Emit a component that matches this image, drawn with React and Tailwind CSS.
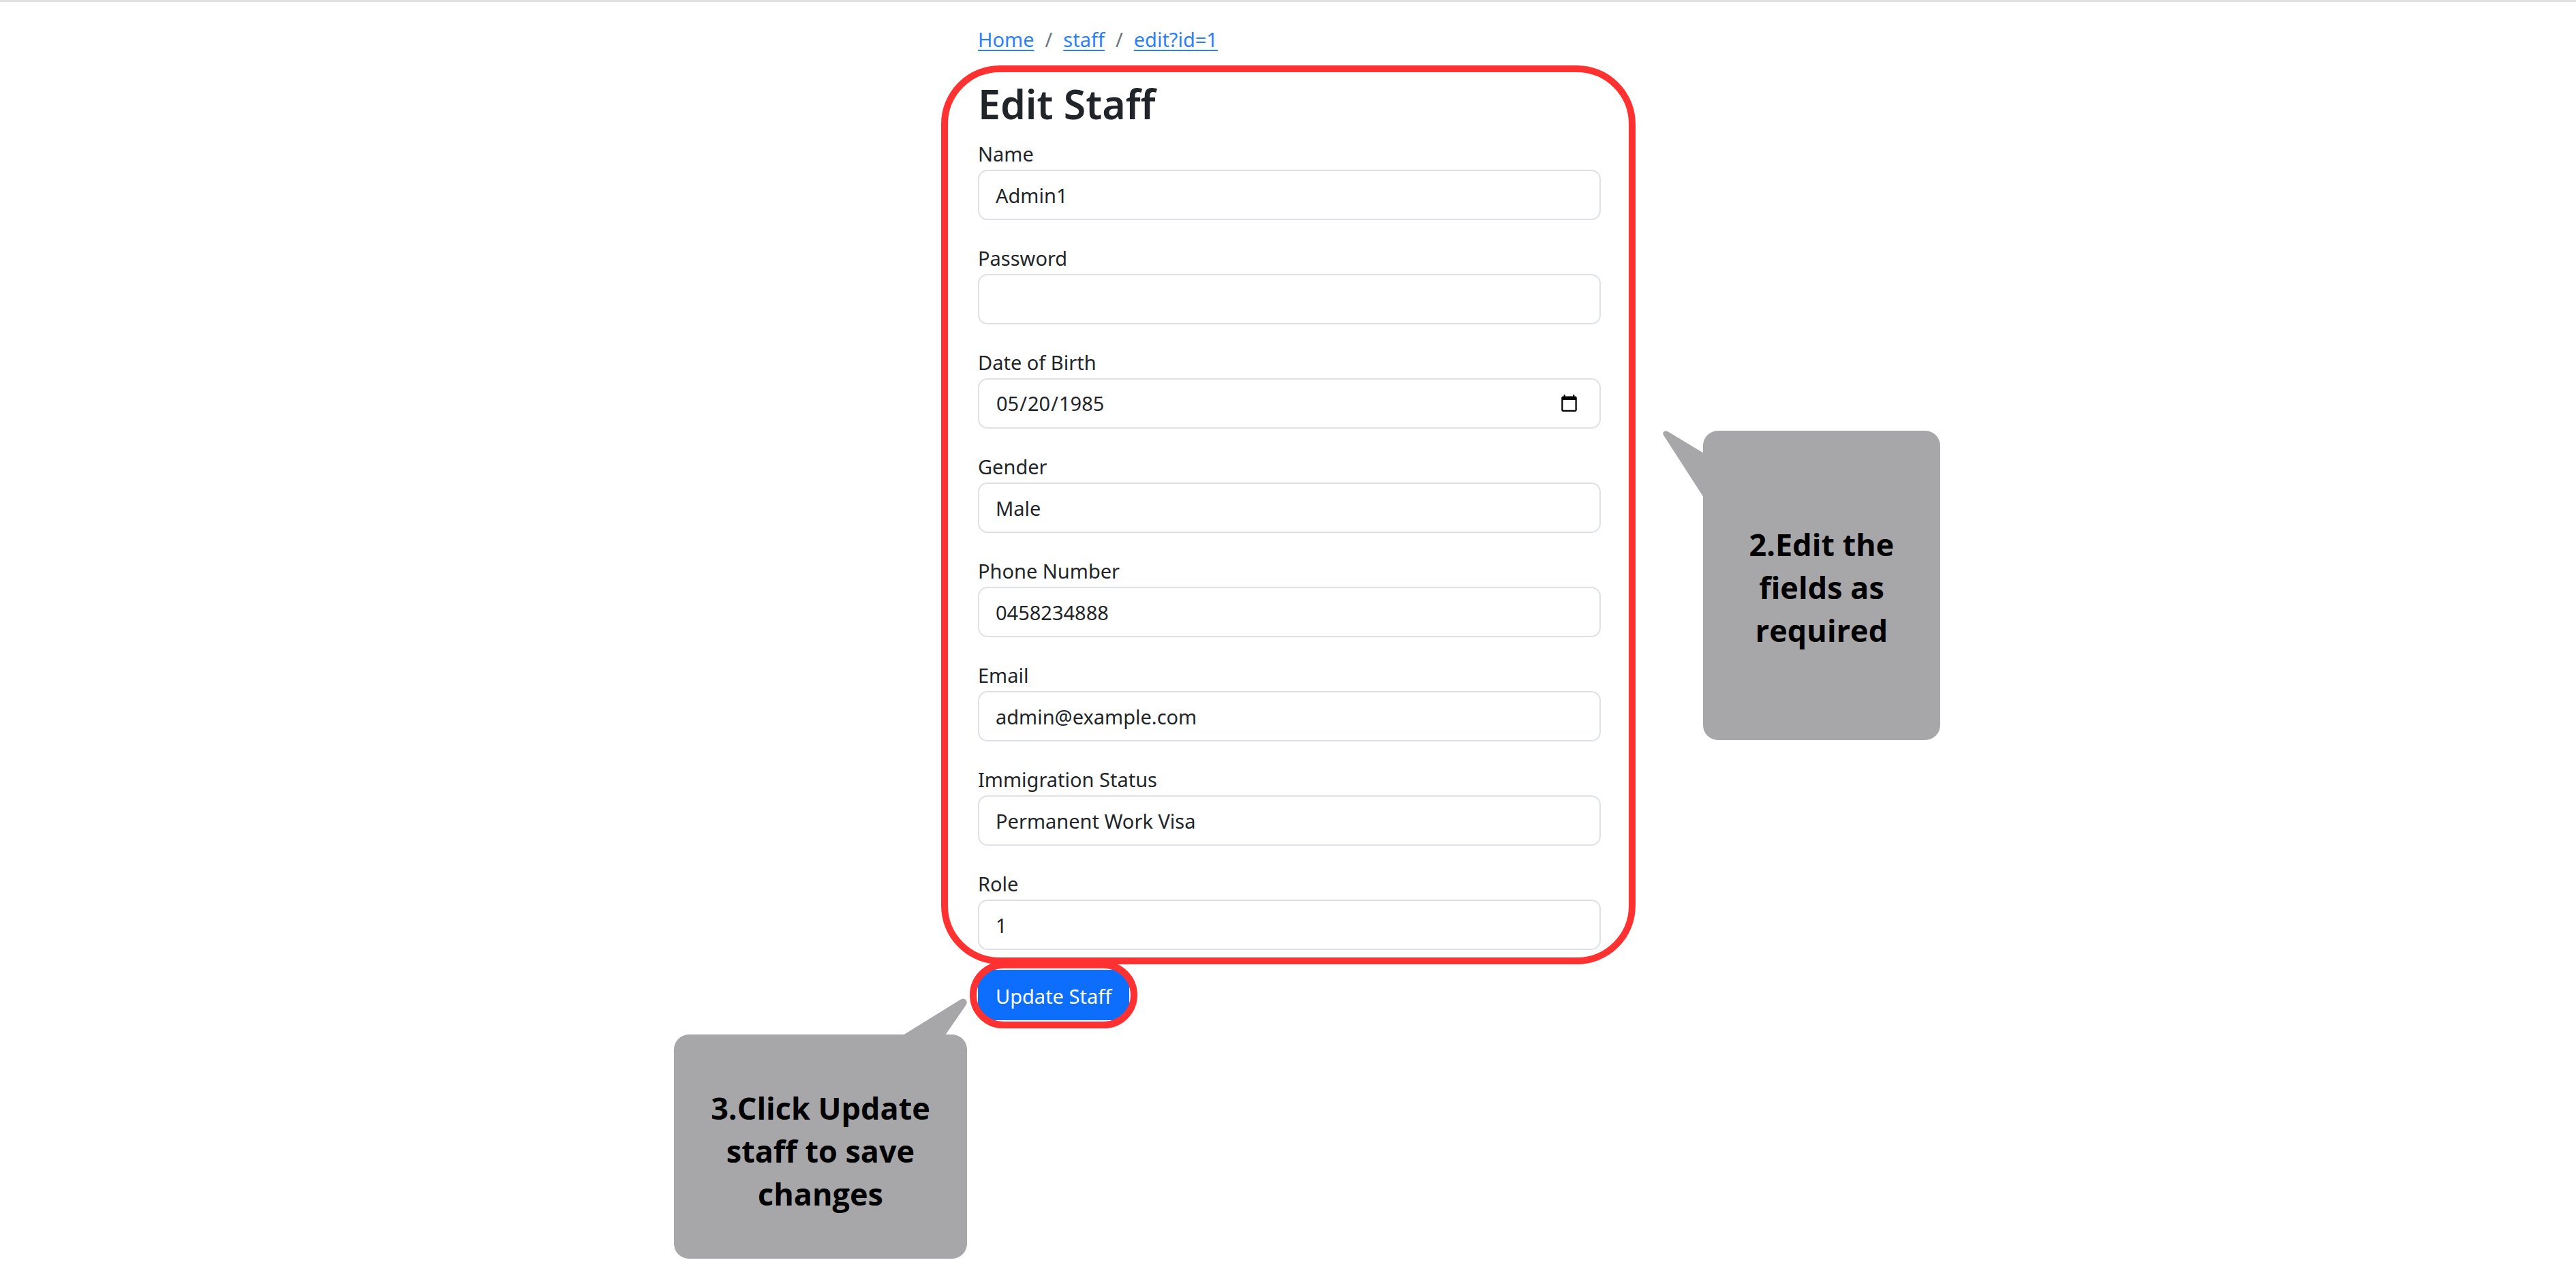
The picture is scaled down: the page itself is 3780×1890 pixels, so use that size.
const fields = [
  { id: "name", label: "Name", type: "text", value: "Admin1" },
  { id: "password", label: "Password", type: "password", value: "" },
  { id: "dob", label: "Date of Birth", type: "date", value: "1985-05-20" },
  { id: "gender", label: "Gender", type: "text", value: "Male" },
  { id: "phone", label: "Phone Number", type: "tel", value: "0458234888" },
  { id: "email", label: "Email", type: "email", value: "admin@example.com" },
  { id: "immigration", label: "Immigration Status", type: "text", value: "Permanent Work Visa" },
  { id: "role", label: "Role", type: "text", value: "1" },
];

const crumbs = [
  { label: "Home", href: "#home" },
  { label: "staff", href: "#staff" },
  { label: "edit?id=1", href: "#edit" },
];

function Breadcrumb() {
  return (
    <nav aria-label="Breadcrumb" className="pt-8">
      <ol className="flex">
        {crumbs.map((crumb, index) => (
          <li key={crumb.href} className="flex">
            {index > 0 && (
              <span aria-hidden="true" className="px-4 text-[#6c757d]">
                /
              </span>
            )}
            <a
              href={crumb.href}
              className="text-[#2b7fff] underline decoration-2 underline-offset-4"
            >
              {crumb.label}
            </a>
          </li>
        ))}
      </ol>
    </nav>
  );
}

function Field({ id, label, type, value }) {
  return (
    <div className="flex flex-col">
      <label htmlFor={id}>{label}</label>
      <input
        id={id}
        name={id}
        type={type}
        defaultValue={value}
        className="h-[74px] w-full rounded-[14px] border-2 border-[#dee2e6] bg-white pr-7 pl-6 outline-none"
      />
    </div>
  );
}

function FieldsCallout() {
  return (
    <aside className="absolute top-[536px] left-full ml-[150px] flex min-h-[454px] w-[348px] items-center rounded-[22px] bg-[#a7a7a9] px-[60px] pt-1">
      <svg
        aria-hidden="true"
        viewBox="0 0 60 98"
        className="absolute top-0 right-full -mr-px h-[98px] w-[60px] fill-[#a7a7a9]"
      >
        <path d="M60 33 L7 1 Q3 -1 1 2 Q-1 4 2 8 L60 98 Z" />
      </svg>
      <p className="w-full text-center font-['Open_Sans',sans-serif] text-[45px] leading-[63px] font-bold text-black">
        2.Edit the fields as required
      </p>
    </aside>
  );
}

function SaveCallout() {
  return (
    <aside className="absolute top-[95px] right-full mr-4 flex min-h-[329px] w-[430px] items-center rounded-[22px] bg-[#a7a7a9] px-12 pt-3">
      <svg
        aria-hidden="true"
        viewBox="0 0 94 54"
        className="absolute right-0 bottom-full -mb-px h-[54px] w-[94px] fill-[#a7a7a9]"
      >
        <path d="M0 54 L84 2 Q89 -1 92 2 Q95 5 93 9 L62 54 Z" />
      </svg>
      <p className="w-full text-center font-['Open_Sans',sans-serif] text-[45px] leading-[63px] font-bold text-black">
        3.Click Update staff to save changes
      </p>
    </aside>
  );
}

export default function App() {
  return (
    <div className="min-h-screen border-t-[3px] border-[#e1e1e1] bg-white pl-1 font-['Noto_Sans',sans-serif] text-[29px] leading-[46px] text-[#212529]">
      <div className="mx-auto w-full max-w-[914px]">
        <Breadcrumb />
        <form>
          <section className="relative mt-[15px] pt-5 pb-[21px]">
            <h1 className="mb-[15px] text-[59px] leading-[72px] font-semibold">Edit Staff</h1>
            <div className="flex flex-col gap-[33px]">
              {fields.map((field) => (
                <Field key={field.id} {...field} />
              ))}
            </div>
            <div
              aria-hidden="true"
              className="pointer-events-none absolute inset-y-0 -right-[51px] -left-[54px] rounded-[86px] border-[10px] border-[#ff3131]"
            />
            <FieldsCallout />
          </section>
          <div className="relative mt-2 w-fit">
            <button
              type="submit"
              className="block h-[74px] rounded-[14px] bg-[#0d6efd] px-[26px] pt-1 text-white"
            >
              Update Staff
            </button>
            <div
              aria-hidden="true"
              className="pointer-events-none absolute -inset-3 rounded-full border-[10px] border-[#ff3131]"
            />
            <SaveCallout />
          </div>
        </form>
      </div>
    </div>
  );
}
